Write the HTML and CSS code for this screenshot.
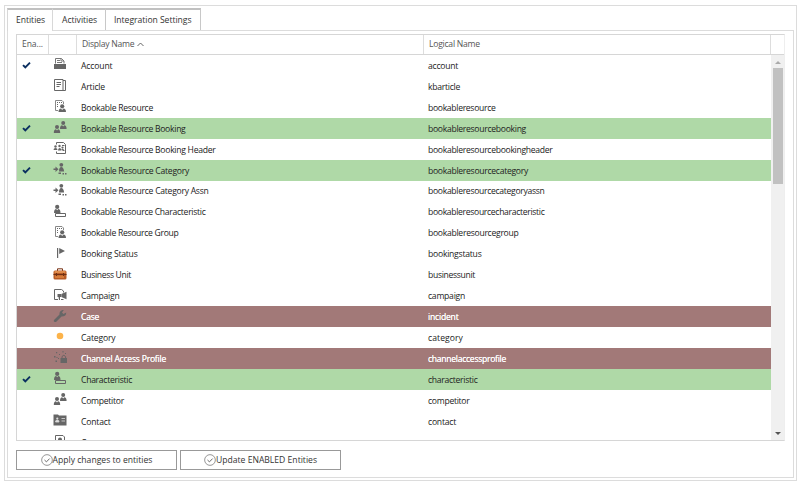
FILE: index.html
```html
<!DOCTYPE html>
<html lang="en">
<head>
<meta charset="utf-8">
<title>Entities</title>
<link rel="stylesheet" href="styles.css">
</head>
<body>
<svg class="defs" width="0" height="0">
  <symbol id="check" viewBox="0 0 9 8"><path d="M1 4.1l2.3 2.2L8 1.600" fill="none" stroke="#0b2f60" stroke-width="1.900"/></symbol>
  <symbol id="account" viewBox="0 0 14 14"><path d="M2.500 6.500v-5h6l2.500 2.500v2.500M8 1.500V4h3M4 3.500h3M4 5.500h5" fill="none" stroke="#777"/><path d="M1 7h12v5H1z"/></symbol>
  <symbol id="article" viewBox="0 0 14 14"><path d="M1.500 1.500h8.500v11H1.500zM10 2.500h2.500v10H10M3.500 4.500H8M3.500 6.500H8M3.500 8.500h3" fill="none" stroke="#666"/></symbol>
  <symbol id="resource" viewBox="0 0 14 14"><path d="M5 11.500H2.500v-10H9l1.500 1.500v2" fill="none" stroke="#888"/><path d="M4 3h1v1H4zM6 3h1v1H6zM8 3h1v1H8zM4 5h1v1H4zM4 7h1v1H4z"/><circle cx="9.200" cy="7.300" r="2.100"/><path d="M5.500 13q0-3.500 2.500-3.500l1.200 1.500 1.200-1.500q2.600 0 2.600 3.500z"/></symbol>
  <symbol id="people" viewBox="0 0 14 14"><circle cx="4" cy="7" r="2"/><path d="M.8 13q0-3.700 2.200-3.700l1 1.200 1-1.200q2.200 0 2.200 3.700z"/><circle cx="10.200" cy="3" r="2"/><path d="M7 9q0-3.700 2.200-3.700l1 1.200 1-1.200q2.400 0 2.400 3.700z"/></symbol>
  <symbol id="header" viewBox="0 0 14 14"><path d="M3.500 3.500v-2h7l2 2v9h-9v-2M9 4.500h2.500M9.500 9.500h2" fill="none" stroke="#666"/><circle cx="2.500" cy="5.500" r="1.200"/><circle cx="6.500" cy="5" r="1.200"/><circle cx="9.500" cy="6.500" r="1.100"/><path d="M.5 9q0-2 2-2t2 2zM5 9.500q0-2.500 1.700-2.500t1.800 2.500zM8.500 9q0-1.500 1-1.500t1.500 1.500z"/></symbol>
  <symbol id="assign" viewBox="0 0 14 14"><path d="M.5 6.500h2V4.500l3 2.700-3 2.700V8h-2z"/><circle cx="8.300" cy="2.800" r="1.900"/><path d="M6 9.500q0-4.500 2.300-4.500t2.800 4.500zM5.500 10.500H8V12H5.500zM9.500 11H11v1.500H9.500zM12 11h1.500v1.500H12z"/></symbol>
  <symbol id="trait" viewBox="0 0 14 14"><circle cx="4.200" cy="2.900" r="2.100"/><path d="M1 9q0-4 2.200-4l1 1.200 1-1.200q2.300 0 2.300 4z"/><path d="M2.500 9.500h10v3h-10z" fill="none" stroke="#666"/></symbol>
  <symbol id="flag" viewBox="0 0 14 14"><path d="M4 2h1.200v10H4zM6.200 2l5.800 3-5.800 3z"/></symbol>
  <symbol id="case" viewBox="0 0 14 14"><path d="M4.500 4V1.800h5V4" fill="none" stroke="#793314"/><rect x=".5" y="3.500" width="13" height="9" rx="1.500" fill="#b85b25"/><path d="M1.500 4h11v2h-11z" fill="#df8b4b"/><path d="M2 8.500h9v2.500H2z" fill="#d57a39"/><path d="M.5 7h13v1H.5zM3 6h1v3H3zM10 6h1v3h-1z" fill="#713012"/></symbol>
  <symbol id="campaign" viewBox="0 0 14 14"><path d="M10.500 4.500V3L8.500 1.500h-7v10H5M8 11.500h2.500" fill="none" stroke="#666"/><path d="M4.500 6H8v3H4.500zM8.300 6L13.500 3.800v7.400L8.300 9zM5.500 9h1.500v3H6z"/></symbol>
  <symbol id="wrench" viewBox="0 0 14 14"><path d="M1 11l5.500-5.500Q6 2 9.500 1l1.300.1L9 3.500 10.500 5l2.700-1.600Q13.500 7.500 8.500 7.500L3 13q-3 0-2-2z"/></symbol>
  <symbol id="dot" viewBox="0 0 14 14"><circle cx="7" cy="7" r="3.300" fill="#fcb34a"/></symbol>
  <symbol id="lock" viewBox="0 0 14 14"><path d="M1 6h1.500v1.500H1zM3.500 7h1v1h-1zM5 8h1v1H5zM3 2h1.200v1.200H3zM6 4h1v1H6zM9.500 1h1v1.500h-1zM12 3h1v1h-1zM2.500 10.500H4V12H2.500zM7.500 8H14v5H7.500z"/><path d="M9 8V6.500q1.800-2.500 3.600 0V8" fill="none" stroke="#6a6263"/></symbol>
  <symbol id="contact" viewBox="0 0 14 14"><path d="M.5 1.500H5l1 1h7.500v10H.5z"/><path d="M8.500 5.500H12M8.500 8H12M2.500 9q0-2 1.800-2T6 9z" stroke="#ddd" fill="#ddd" stroke-width=".8"/><circle cx="4.300" cy="5.500" r="1.100" fill="#ddd"/></symbol>
  <symbol id="contract" viewBox="0 0 14 14"><path d="M2.500 1.500H10l1.500 1.500v10h-9z" fill="none" stroke="#666"/><circle cx="7" cy="5.500" r="2"/></symbol>
  <symbol id="ok" viewBox="0 0 11 11"><circle cx="5.500" cy="5.500" r="4.900" fill="none" stroke="#888" stroke-width=".8"/><path d="M3.200 5.500l1.800 1.700 2.900-3" fill="none" stroke="#666" stroke-width=".9"/></symbol>
</svg>
<main class="frame">
  <nav class="tabs">
    <div class="tab active">Entities</div><div class="tab activities">Activities</div><div class="tab integration">Integration Settings</div>
  </nav>
  <section class="panel">
    <div class="grid">
      <div class="head">
        <div class="h-enabled">Ena...</div><div class="h-icon"></div>
        <div class="h-name">Display Name <svg width="7" height="5" viewBox="0 0 7 5"><path d="M.5 4l3-3 3 3" fill="none" stroke="#555" stroke-width=".9"/></svg></div>
        <div class="h-logical">Logical Name</div><div class="h-end"></div>
      </div>
      <div class="body">
        <div class="rows" id="rows"></div>
        <div class="scroll"><i class="up"></i><div class="thumb"></div><i class="down"></i></div>
      </div>
    </div>
    <div class="actions">
      <button><svg width="12" height="12"><use href="#ok"/></svg><span>Apply changes to entities</span></button>
      <button><svg width="12" height="12"><use href="#ok"/></svg><span>Update ENABLED Entities</span></button>
    </div>
  </section>
</main>
<script src="rows.js"></script>
</body>
</html>
```
FILE: rows.js
```js
// name, name width, logical name, logical width, icon, state
const entities = [
  ["Account", 31.5, "account", 30, "account", "checked"],
  ["Article", 24, "kbarticle", 32, "article", ""],
  ["Bookable Resource", 72, "bookableresource", 67.5, "resource", ""],
  ["Bookable Resource Booking", 104.5, "bookableresourcebooking", 98, "people", "checked green"],
  ["Bookable Resource Booking Header", 134.5, "bookableresourcebookingheader", 124.5, "header", ""],
  ["Bookable Resource Category", 108, "bookableresourcecategory", 100, "assign", "checked green"],
  ["Bookable Resource Category Assn", 127.5, "bookableresourcecategoryassn", 116.5, "assign", ""],
  ["Bookable Resource Characteristic", 124.5, "bookableresourcecharacteristic", 116.5, "trait", ""],
  ["Bookable Resource Group", 97.5, "bookableresourcegroup", 90.5, "resource", ""],
  ["Booking Status", 56.5, "bookingstatus", 53.5, "flag", ""],
  ["Business Unit", 50, "businessunit", 47, "case", ""],
  ["Campaign", 38.5, "campaign", 37, "campaign", ""],
  ["Case", 18, "incident", 30.5, "wrench", "red"],
  ["Category", 34.5, "category", 35, "dot", ""],
  ["Channel Access Profile", 85, "channelaccessprofile", 78, "lock", "red"],
  ["Characteristic", 51, "characteristic", 49.5, "trait", "checked green"],
  ["Competitor", 43, "competitor", 41.500, "people", ""],
  ["Contact", 29.5, "contact", 28, "contact", ""],
  ["Contract", 32.5, "contract", 31, "contract", ""]
];
document.getElementById("rows").innerHTML = entities.map(([name, nw, logical, lw, icon, state]) =>
  `<div class="row ${state}">
    <div class="mark">${state.includes("checked") ? '<svg width="9" height="8"><use href="#check"/></svg>' : ""}</div>
    <div class="icon"><svg width="14" height="14"><use href="#${icon}"/></svg></div>
    <div class="name"><span data-width="${nw}">${name}</span></div><div class="logical"><span data-width="${lw}">${logical}</span></div>
  </div>`).join("");
for (const span of document.querySelectorAll("[data-width]")) {
  const extra = span.dataset.width - span.getBoundingClientRect().width;
  span.style.letterSpacing = (extra / span.textContent.length).toFixed(3) + "px";
}
```
FILE: styles.css
```css
* { box-sizing: border-box; }
body { margin: 0; padding: 5px 0 0 4px; background: #fff; font: 8.6px/12px "Open Sans", "Noto Sans", sans-serif; color: #222; overflow: hidden; }
.defs { position: absolute; }
svg { display: block; fill: #666; }
.frame { width: 793px; height: 476px; border: 1px solid #dcdcdc; padding: 2px; }
.tabs { display: flex; height: 23px; position: relative; z-index: 1; }
.tab { height: 22px; border-top: 2px solid #c0c0c0; border-right: 1px solid #c8c8c8; padding: 4px 0 0 9px; color: #333; white-space: nowrap; letter-spacing: -.04px; }
.tab.active { width: 46px; height: 23px; border-left: 1px solid #d8d8d8; border-right-color: #d8d8d8; padding-left: 8px; background: #fff; }
.activities { width: 53px; }
.integration { width: 95px; padding-left: 8px; }
.panel { width: 787px; height: 448px; margin-top: -1px; border: 1px solid #dcdcdc; padding: 3px 8px 0; }
.grid { width: 769px; height: 407px; border: 1px solid #d6d6d6; border-right-color: #eee; display: flex; flex-direction: column; }
.head { display: flex; height: 20px; border-bottom: 1px solid #d6d6d6; color: #555; line-height: 19px; flex: none; letter-spacing: -.25px; }
.head > div { border-right: 1px solid #ddd; }
.head .h-enabled { width: 32px; padding-left: 5px; letter-spacing: -.1px; }
.h-icon { width: 28px; }
.head .h-name { width: 347px; padding-left: 5px; display: flex; align-items: center; gap: 3px; }
.h-logical { width: 347px; padding-left: 5px; }
.head .h-end { flex: 1; border: 0; }
.body { display: flex; flex: 1; min-height: 0; }
.rows { width: 754px; overflow: hidden; }
.row { display: flex; align-items: center; height: 20.93px; border-top: 1px solid transparent; }
.green { background: #afd9a7; }
.red { background: #a27978; color: #fff; text-shadow: 0 0 .6px #fff; }
.mark { width: 35.5px; padding: 0 0 2px 5px; }
.icon { width: 28.5px; padding-bottom: 3px; }
.name { width: 347px; }
.scroll { width: 13px; background: #f0f0f0; display: flex; flex-direction: column; align-items: center; }
.up, .down { width: 0; height: 0; border: 3px solid transparent; }
.up { border-top: 0; border-bottom-color: #aaa; margin-top: 6px; }
.down { border-bottom: 0; border-top-color: #555; margin: auto 0 5px; }
.thumb { width: 10px; height: 116px; margin-top: 4px; background: #c1c1c1; }
.actions { display: flex; gap: 3px; margin-top: 9px; }
button { width: 161px; height: 20px; border: 1px solid #999; border-radius: 0; background: #fff; padding: 0; display: flex; align-items: center; justify-content: center; font: inherit; color: #333; }
```
